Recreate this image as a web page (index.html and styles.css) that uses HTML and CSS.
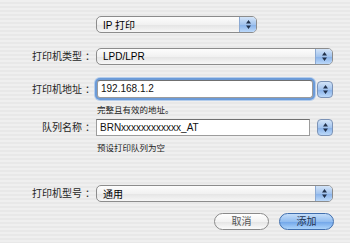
FILE: index.html
```html
<!DOCTYPE html>
<html lang="zh-CN">
  <head>
    <meta charset="UTF-8" />
    <title>打印机</title>
    <link rel="stylesheet" href="styles.css">
  </head>
  <body>
    <div class="sheet">
      <div class="row row-top">
        <div class="label"></div>
        <div class="popup popup-short">
          <span class="popup-text">IP 打印</span>
          <span class="arrows"><svg width="7" height="11" viewBox="0 0 7 11"><path d="M3.5 1 L6 4.5 L1 4.5 Z M3.5 10 L6 6.5 L1 6.5 Z" fill="#22324c"/></svg></span>
        </div>
      </div>

      <div class="row row-type">
        <div class="label">打印机类型<span class="colon">：</span></div>
        <div class="popup popup-wide">
          <span class="popup-text">LPD/LPR</span>
          <span class="arrows"><svg width="7" height="11" viewBox="0 0 7 11"><path d="M3.5 1 L6 4.5 L1 4.5 Z M3.5 10 L6 6.5 L1 6.5 Z" fill="#22324c"/></svg></span>
        </div>
      </div>

      <div class="row row-address">
        <div class="label">打印机地址<span class="colon">：</span></div>
        <div class="field field-focus">192.168.1.2</div>
        <div class="combo"><svg width="7" height="11" viewBox="0 0 7 11"><path d="M3.5 1 L6 4.5 L1 4.5 Z M3.5 10 L6 6.5 L1 6.5 Z" fill="#22324c"/></svg></div>
      </div>
      <div class="hint hint-address">完整且有效的地址。</div>

      <div class="row row-queue">
        <div class="label">队列名称<span class="colon">：</span></div>
        <div class="field field-queue">BRNxxxxxxxxxxxx_AT</div>
        <div class="combo"><svg width="7" height="11" viewBox="0 0 7 11"><path d="M3.5 1 L6 4.5 L1 4.5 Z M3.5 10 L6 6.5 L1 6.5 Z" fill="#22324c"/></svg></div>
      </div>
      <div class="hint hint-queue">预设打印队列为空</div>

      <div class="row row-model">
        <div class="label">打印机型号<span class="colon">：</span></div>
        <div class="popup popup-wide">
          <span class="popup-text">通用</span>
          <span class="arrows"><svg width="7" height="11" viewBox="0 0 7 11"><path d="M3.5 1 L6 4.5 L1 4.5 Z M3.5 10 L6 6.5 L1 6.5 Z" fill="#22324c"/></svg></span>
        </div>
      </div>

      <div class="buttons">
        <button class="pill pill-cancel">取消</button>
        <button class="pill pill-add">添加</button>
      </div>
    </div>
  </body>
</html>
```

FILE: styles.css
```css
body {
  margin: 0;
  width: 350px;
  height: 243px;
  overflow: hidden;
  font-family: "Liberation Sans", "Noto Sans CJK SC", sans-serif;
  color: #111;
  background: repeating-linear-gradient(#efefef 0, #efefef 2px, #e8e8e8 2px, #e8e8e8 4px);
}
.sheet {
  padding-top: 16px;
  display: flex;
  flex-direction: column;
}
.row {
  display: flex;
  align-items: center;
  height: 17px;
}
.label {
  width: 95px;
  margin-right: 1px;
  flex-shrink: 0;
  text-align: right;
  font-size: 10px;
  line-height: 17px;
  color: #262626;
  white-space: nowrap;
}
.colon {
  padding-left: 3px;
}
.row-type {
  margin-top: 15px;
}
.row-address {
  margin-top: 15px;
  height: 18px;
}
.row-queue {
  margin-top: 3px;
}
.row-model {
  margin-top: 31px;
}
.popup {
  height: 15px;
  border: 1px solid #8c8c8c;
  border-radius: 5px;
  background: linear-gradient(#fdfdfd, #f1f1f1 50%, #e4e4e4 51%, #f6f6f6);
  display: flex;
  align-items: center;
  justify-content: space-between;
  overflow: hidden;
}
.popup-short {
  width: 159px;
}
.popup-wide {
  width: 235px;
}
.popup-text {
  padding-left: 6px;
  font-size: 10px;
  color: #000;
}
.arrows {
  width: 16px;
  height: 15px;
  border-left: 1px solid #8ba9d2;
  background: linear-gradient(#d3e4f8, #a3c4ee 50%, #86b0e8 51%, #bcd9fa);
  display: flex;
  align-items: center;
  justify-content: center;
}
.field {
  height: 16px;
  background: #fff;
  border: 1px solid #9c9c9c;
  border-top-color: #707070;
  font-size: 10px;
  line-height: 16px;
  padding-left: 3px;
  box-sizing: border-box;
}
.field-focus {
  width: 216px;
  margin-left: 1px;
  height: 18px;
  line-height: 16px;
  border-radius: 3px;
  box-shadow: 0 0 0 2px #6c9bd8, 0 0 0 3px #b4cdec;
}
.field-queue {
  width: 214px;
  height: 17px;
}
.combo {
  width: 14px;
  height: 15px;
  margin-left: auto;
  margin-right: 17px;
  border: 1px solid #7c93b6;
  border-radius: 4px;
  background: linear-gradient(#d3e4f8, #a3c4ee 50%, #86b0e8 51%, #bcd9fa);
  display: flex;
  align-items: center;
  justify-content: center;
}
.hint {
  padding-left: 97px;
  font-size: 8.5px;
  line-height: 12px;
  color: #222;
}
.hint-address {
  margin-top: 6px;
}
.hint-queue {
  margin-top: 6px;
}
.buttons {
  display: flex;
  justify-content: flex-end;
  gap: 10px;
  margin-top: 11px;
  padding-right: 16px;
}
.pill {
  width: 55px;
  height: 17px;
  border-radius: 9px;
  font-family: "Liberation Sans", "Noto Sans CJK SC", sans-serif;
  font-size: 10px;
  padding: 0;
  line-height: 15px;
}
.pill-cancel {
  border: 1px solid #8a8a8a;
  background: linear-gradient(#ffffff, #f2f2f2 50%, #e3e3e3 51%, #fbfbfb);
  color: #555;
}
.pill-add {
  border: 1px solid #416fae;
  background: linear-gradient(#c4ddf9, #92bdf0 50%, #6fa4e8 51%, #acd4fb);
  color: #1f3350;
}
```
